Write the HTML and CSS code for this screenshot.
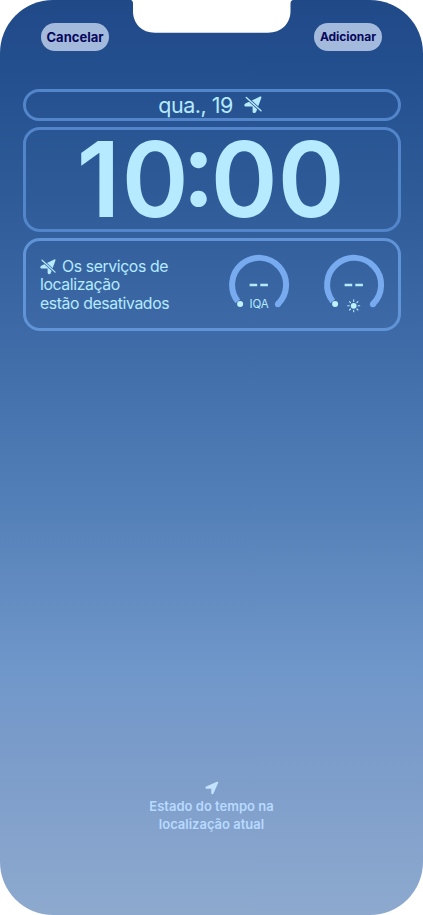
FILE: index.html
```html
<!DOCTYPE html>
<html lang="pt">
<head>
<meta charset="utf-8">
<title>Estado do tempo</title>
<link rel="stylesheet" href="styles.css">
</head>
<body>
<svg class="defs" width="0" height="0">
  <mask id="slash-gap" maskUnits="userSpaceOnUse" x="0" y="0" width="18" height="18">
    <rect width="18" height="18" fill="#fff"/>
    <path d="M0-.7 18 15.700" stroke="#000" stroke-width="3"/>
  </mask>
  <symbol id="location-off" viewBox="0 0 18 18">
    <path class="fill" mask="url(#slash-gap)" d="M16 .6Q17.900-.1 17.300 1.900L12.200 15.700C11.300 17.600 8.600 17.500 8.600 15.500V10.600H2C0 10.600-.2 8.500 1.400 7.600Z"/>
    <path class="line" d="M2.300 1.400 17 14.800"/>
  </symbol>
</svg>
<main class="phone">
  <div class="notch"><svg width="164" height="34" viewBox="0 0 164 34"><path d="M-1 0C1 0 2 1 2 4V11C2 24 11 32.700 24 32.700H137C150 32.700 159.500 24 159.500 11V4C159.500 1 160.500 0 162.500 0Z"/></svg></div>
  <header class="bar">
    <button class="pill"><span class="cancel">Cancelar</span></button>
    <button class="pill"><span class="add">Adicionar</span></button>
  </header>
  <section class="frame date"><span class="day">qua., 19</span><svg class="icon"><use href="#location-off"/></svg></section>
  <section class="frame clock"><span class="d1">1</span><span class="d0">0</span><span class="colon">:</span><span class="d0">0</span><span class="d0">0</span></section>
  <section class="frame widgets">
    <p class="notice"><svg class="icon"><use href="#location-off"/></svg>Os serviços de<br>localização<br>estão desativados</p>
    <div class="gauge">
      <svg class="ring" viewBox="0 0 60 60"><path class="arc" d="M8.800 46.400A27 27 0 1 1 48.900 49.200"/><circle class="cap" cx="48.900" cy="49.200" r="3"/><circle class="dot" cx="11.100" cy="49" r="3"/><path class="dashes" d="M20.600 30H28.200M31.300 30H38.900"/></svg>
      <span class="label">IQA</span>
    </div>
    <div class="gauge">
      <svg class="ring" viewBox="0 0 60 60"><path class="arc" d="M8.800 46.400A27 27 0 1 1 48.900 49.200"/><circle class="cap" cx="48.900" cy="49.200" r="3"/><circle class="dot" cx="11.100" cy="49" r="3"/><path class="dashes" d="M20.600 30H28.200M31.300 30H38.900"/><circle class="dot" cx="29.700" cy="50.800" r="2.900"/><path class="rays" d="M29.700 44.800V46.400M29.700 55.200V56.800M23.700 50.800H25.300M34.100 50.800H35.700M25.500 46.600 26.500 47.600M32.900 54 33.900 55M25.500 55 26.500 54M32.900 47.600 33.900 46.600"/></svg>
    </div>
  </section>
  <footer class="place">
    <svg width="14" height="14" viewBox="0 0 14 14"><path d="M11.900.8Q13.600.2 13.100 1.900L8.600 12.300C8 13.700 6.300 13.500 6.300 12V7.800H1.700C.2 7.700 0 6.200 1.200 5.600Z"/></svg>
    <span class="p1">Estado do tempo na</span>
    <span class="p2">localização atual</span>
  </footer>
</main>
</body>
</html>
```
FILE: styles.css
```css
body { margin: 0; background: #fff; font-family: Inter, sans-serif; }
.defs { position: absolute; }
.phone {
  position: relative;
  box-sizing: border-box;
  width: 423px;
  height: 915px;
  overflow: hidden;
  border-radius: 53px;
  display: flex;
  flex-direction: column;
  color: #b5eaff;
  background: linear-gradient(#204988 0, #255190 90px, #2e5b98 190px, #3966a3 290px, #426faa 370px, #527fb7 500px, #7097ca 670px, #7d9dca 770px, #8da9ce 915px);
}
.notch { position: absolute; top: 0; left: 131px; height: 34px; }
.notch path { fill: #fff; }
.bar { display: flex; justify-content: space-between; padding: 22.700px 41px 0; height: 66px; }
.pill {
  display: flex; align-items: center; justify-content: center;
  width: 68px; height: 28px; padding: 0; border: 0; border-radius: 14px;
  background: #a4badd; color: #07085a;
  font: 700 13px Inter, sans-serif; white-space: nowrap;
}
.add { font-size: 12px; letter-spacing: -.05px; }
.frame {
  box-sizing: border-box; width: 377.500px; margin-left: 23px;
  border: 3px solid #5285ca; border-radius: 17px; display: flex;
}
.date { height: 32px; align-items: center; justify-content: center; padding-right: 3px; font-size: 21.500px; line-height: 26px; gap: 11.500px; letter-spacing: -.5px; }
.icon { width: 18px; height: 18px; overflow: visible; }
.fill { fill: #b5eaff; }
.line { fill: none; stroke: #b5eaff; stroke-width: 1.400; stroke-linecap: round; }
.clock { height: 105px; margin-top: 6px; padding-left: 48.500px; font-size: 104px; font-weight: 600; line-height: 99px; }
.clock span { display: block; width: 67px; height: 99px; text-align: center; transform: scaleX(.975); }
.clock .d1 { width: 46px; transform: translateX(1px); }
.clock .colon { width: 22.200px; display: flex; justify-content: center; transform: translateY(-11.500px); }
.widgets { height: 93px; margin-top: 6px; border-color: #6094d7; }
.notice { box-sizing: border-box; width: 203px; margin: 0; padding: 17px 0 0 14px; font-size: 15.800px; letter-spacing: -.39px; line-height: 18.500px; white-space: nowrap; }
.notice .icon { width: 16px; height: 16px; margin-right: 6px; vertical-align: -3px; }
.gauge { width: 60px; height: 60px; margin: 14px 35px 0 0; position: relative; flex: none; }
.gauge:last-child { margin-right: 0; }
.ring { display: block; width: 60px; height: 60px; overflow: visible; }
.arc { fill: none; stroke: #77aaee; stroke-width: 6; }
.cap { fill: #77aaee; }
.dot { fill: #c0f2ff; }
.dashes { stroke: #b5eaff; stroke-width: 2.500; }
.rays { stroke: #b5eaff; stroke-width: 1.100; stroke-linecap: round; }
.label { position: absolute; left: 0; right: 0; top: 43.500px; text-align: center; font-size: 11.500px; line-height: 13px; letter-spacing: -.2px; }
.place { display: flex; flex-direction: column; align-items: center; margin-top: 450px; color: #b8daff; font-size: 13px; font-weight: 600; line-height: 18px; }
.place svg { fill: #c3e2ff; margin-bottom: 2px; }
```
